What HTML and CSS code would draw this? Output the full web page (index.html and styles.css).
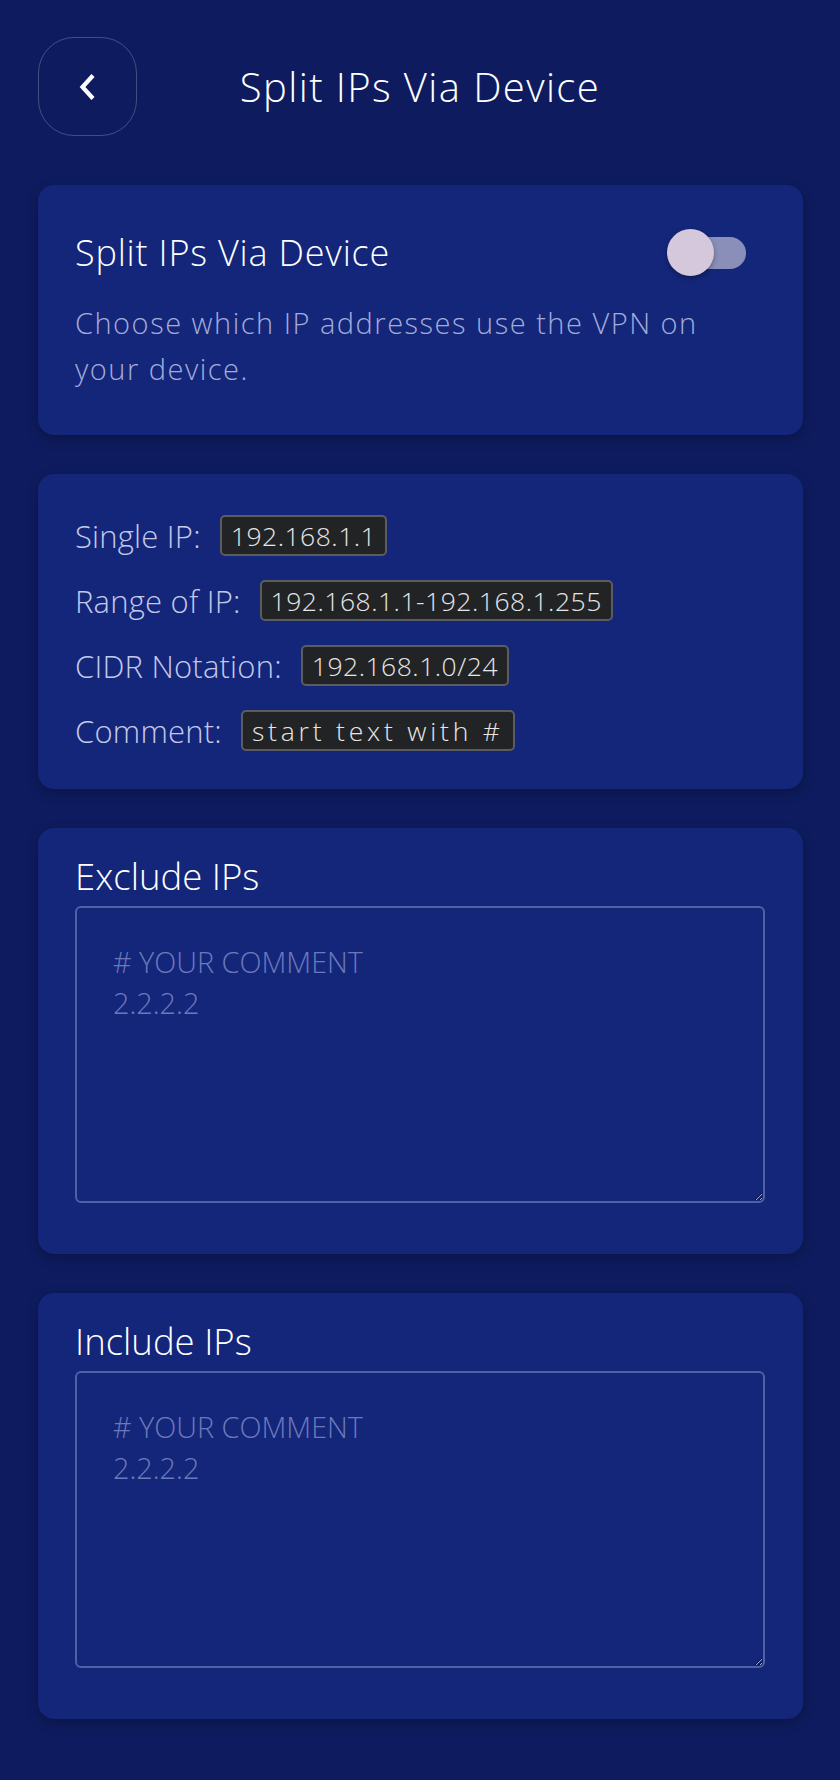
FILE: index.html
```html
<!DOCTYPE html>
<html lang="en">
<head>
<meta charset="utf-8">
<title>Split IPs Via Device</title>
<link rel="stylesheet" href="styles.css">
</head>
<body>
<div class="page">
  <header class="topbar">
    <button class="back" aria-label="Back">
      <svg width="22" height="30" viewBox="0 0 22 30"><path d="M17 3.5 L6.5 15 L17 26.5" fill="none" stroke="#ffffff" stroke-width="4.2" stroke-linejoin="miter"/></svg>
    </button>
    <h1 class="page-title">Split IPs Via Device</h1>
    <span class="spacer"></span>
  </header>

  <section class="card card-intro">
    <div class="intro-row">
      <h2 class="card-title">Split IPs Via Device</h2>
      <span class="switch"><span class="track"></span><span class="thumb"></span></span>
    </div>
    <p class="desc">Choose which IP addresses use the VPN on your device.</p>
  </section>

  <section class="card card-help">
    <div class="help-row"><span class="label">Single IP:</span><span class="chip">192.168.1.1</span></div>
    <div class="help-row"><span class="label">Range of IP:</span><span class="chip">192.168.1.1-192.168.1.255</span></div>
    <div class="help-row"><span class="label">CIDR Notation:</span><span class="chip">192.168.1.0/24</span></div>
    <div class="help-row"><span class="label">Comment:</span><span class="chip chip-text">start text with #</span></div>
  </section>

  <section class="card card-field">
    <h2 class="field-title">Exclude IPs</h2>
    <textarea class="ips" placeholder="# YOUR COMMENT&#10;2.2.2.2"></textarea>
  </section>

  <section class="card card-field">
    <h2 class="field-title">Include IPs</h2>
    <textarea class="ips" placeholder="# YOUR COMMENT&#10;2.2.2.2"></textarea>
  </section>
</div>
</body>
</html>
```

FILE: styles.css
```css
* { box-sizing: border-box; }
html, body {
  margin: 0;
  padding: 0;
  background: #0e1c5f;
}
body {
  font-family: "Open Sans", "Liberation Sans", sans-serif;
  font-weight: 300;
  color: #ffffff;
  width: 840px;
  min-height: 1780px;
}
.page {
  padding: 37px 37.5px 40px;
  display: flex;
  flex-direction: column;
  gap: 39.5px;
}
.topbar {
  display: grid;
  grid-template-columns: 99px 1fr 99px;
  align-items: center;
  margin-bottom: 9px;
}
.back {
  width: 99px;
  height: 99px;
  border-radius: 36px;
  border: 1.5px solid rgba(255,255,255,0.22);
  background: transparent;
  display: flex;
  align-items: center;
  justify-content: center;
  padding: 0;
}
.page-title {
  margin: 0;
  text-align: center;
  font-size: 40px;
  font-weight: 300;
  letter-spacing: 1.4px;
  line-height: 50px;
}
.card {
  background: #14267a;
  border-radius: 16px;
  box-shadow: 0 4px 12px rgba(0, 0, 0, 0.28);
  padding: 0 37.5px;
}
.card-intro {
  padding-top: 44px;
  padding-bottom: 42px;
}
.intro-row {
  display: flex;
  align-items: center;
  justify-content: space-between;
  height: 48px;
}
.card-title {
  margin: 0;
  font-size: 36px;
  font-weight: 300;
  letter-spacing: 0.8px;
}
.switch {
  position: relative;
  width: 79px;
  height: 47px;
  margin-right: 19px;
}
.track {
  position: absolute;
  right: 0;
  top: 7.5px;
  width: 66px;
  height: 32px;
  border-radius: 16px;
  background: #8a8fb9;
}
.thumb {
  position: absolute;
  left: 0;
  top: 0;
  width: 47px;
  height: 47px;
  border-radius: 50%;
  background: #d5c8dd;
  box-shadow: 0 2px 5px rgba(0,0,0,0.35);
}
.desc {
  margin: 23px 0 0;
  font-size: 29px;
  line-height: 46.5px;
  letter-spacing: 1.5px;
  color: #a3abd9;
}
.card-help {
  padding-top: 41px;
  padding-bottom: 37.5px;
  display: flex;
  flex-direction: column;
  gap: 24px;
}
.help-row {
  display: flex;
  align-items: center;
  gap: 19px;
  height: 41px;
}
.label {
  font-size: 31px;
  letter-spacing: 0.2px;
  color: #c3c9ea;
}
.chip {
  height: 41px;
  display: flex;
  align-items: center;
  padding: 0 9px;
  background: #222325;
  border: 2px solid #5b5c60;
  border-radius: 5px;
  font-size: 26.5px;
  color: #e6e6e8;
  letter-spacing: 0.5px;
}
.chip-text {
  letter-spacing: 3.8px;
}
.card-field {
  padding-top: 25.5px;
  padding-bottom: 51px;
}
.field-title {
  margin: 0 0 8px;
  font-size: 36.5px;
  font-weight: 300;
  line-height: 44px;
}
.ips {
  display: block;
  width: 690px;
  height: 297px;
  background: transparent;
  border: 2px solid #4f60a6;
  border-radius: 6px;
  padding: 33px 36px;
  font-family: "Open Sans", "Liberation Sans", sans-serif;
  font-weight: 300;
  font-size: 28.8px;
  line-height: 41.5px;
  color: #ffffff;
  outline: none;
}
.ips::placeholder {
  color: #6b79bc;
  opacity: 1;
}
```
